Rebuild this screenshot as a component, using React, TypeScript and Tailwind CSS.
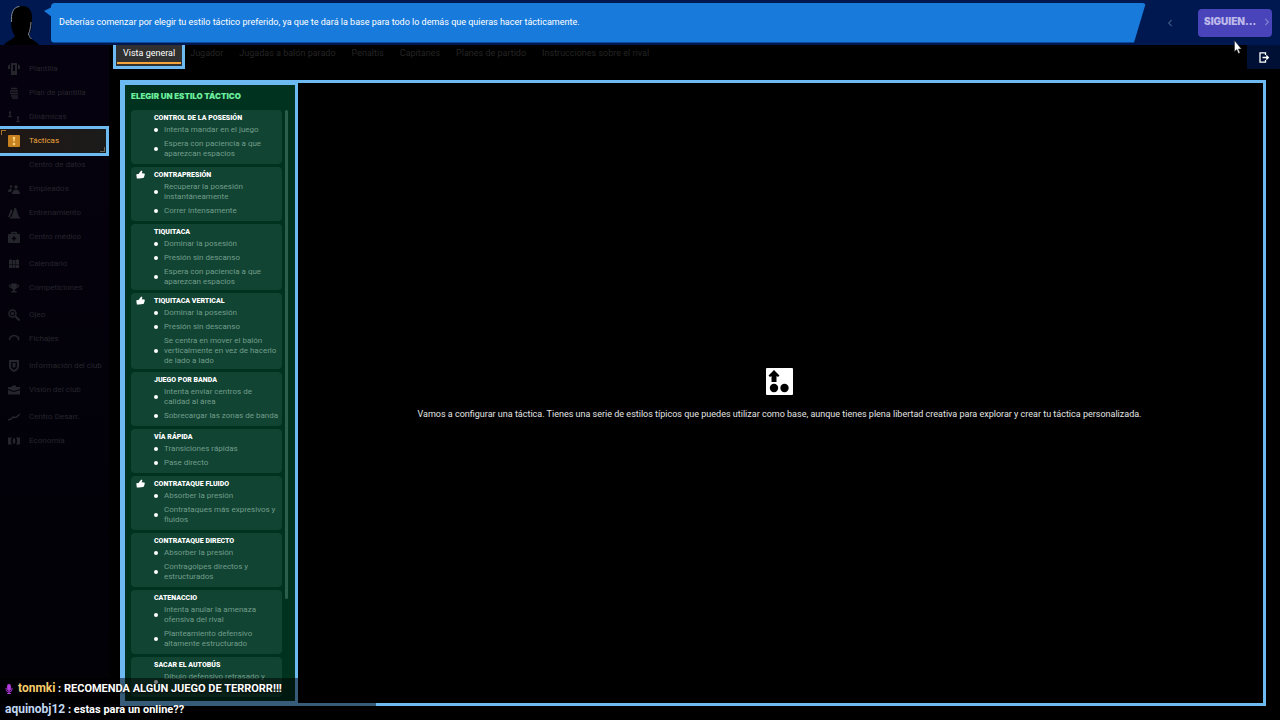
import type { ReactNode } from 'react'
import { FaBriefcaseMedical, FaChevronLeft, FaChevronRight, FaMicrophone, FaTrophy } from 'react-icons/fa'

type MenuItem = { label: string; icon: ReactNode }
type Style = { name: string; recommended?: boolean; traits: string[] }

const shirt = (
  <svg viewBox="0 0 12 12" className="size-3" fill="currentColor">
    <path d="M3 0h6v12H3zM5 2v6h2V2z" fillRule="evenodd" />
    <path d="M2 1v5H0V3zM10 1l2 2v3h-2z" />
  </svg>
)

const clipboard = (
  <svg viewBox="0 0 12 12" className="size-3" fill="none" stroke="currentColor" strokeWidth="1.5">
    <path d="M3 1.500h6M2 4h8M2 6.500h8M3 9h7M4 11h6" />
  </svg>
)

const dynamics = (
  <svg viewBox="0 0 12 12" className="size-3" fill="currentColor">
    <circle cx="2" cy="1.500" r="1.200" />
    <path d="M1.300 3h1.400v2h1v1.200H.3V5h1z" />
    <circle cx="10" cy="6.500" r="1.200" />
    <path d="M9.300 8h1.400v2h1v1.200H8.300V10h1z" />
  </svg>
)

const tactics = (
  <svg viewBox="0 0 12 12" className="size-3">
    <rect width="12" height="12" rx="1" fill="#c8811f" />
    <path d="M6 2.500v4" stroke="#ffd27a" strokeWidth="1.5" />
    <circle cx="6" cy="3" r="1.3" fill="#ffd27a" />
    <circle cx="6" cy="9" r="1.3" fill="#ffd27a" />
  </svg>
)

const staff = (
  <svg viewBox="0 0 12 12" className="size-3" fill="currentColor">
    <circle cx="3" cy="3.500" r="1.300" />
    <circle cx="8" cy="4" r="1.800" />
    <path d="M0 9c0-3 2-4 4-3L3 9zM4 11c0-3 2-4.500 4-4.500s4 1.500 4 4.500z" />
  </svg>
)

const cones = (
  <svg viewBox="0 0 12 12" className="size-3" fill="currentColor">
    <path d="M6.500 1H8l3 9h1v1.500H2V10h1.500zM3 2l1.500 2L2 10H0z" />
  </svg>
)

const calendar = (
  <svg viewBox="0 0 12 12" className="size-3" fill="currentColor">
    <path d="M1 2h3v4H1zM4.500 2h3v4h-3zM8 2h3v4H8zM1 6.500h3V10H1zM4.500 6.500h3V10h-3zM8 6.500h3V10H8zM2 1h1v1H2zM9 1h1v1H9z" />
  </svg>
)

const search = (
  <svg viewBox="0 0 12 12" className="size-3" fill="none" stroke="currentColor">
    <circle cx="4.500" cy="4.500" r="3.500" strokeWidth="1.500" />
    <circle cx="4.500" cy="4.500" r="1.200" fill="currentColor" />
    <path d="M7.500 7.500l4 4" strokeWidth="2" />
  </svg>
)

const transfers = (
  <svg viewBox="0 0 12 12" className="size-3" fill="none" stroke="currentColor" strokeWidth="1.5">
    <path d="M1.500 7A4.500 4.500 0 0 1 10 5M10.500 3.500v4" />
  </svg>
)

const shield = (
  <svg viewBox="0 0 12 12" className="size-3" fill="currentColor">
    <path d="M1 0h10v6c0 3-2 5-5 6-3-1-5-3-5-6zM3 2v4c0 2 1 3 3 4 2-1 3-2 3-4V2z" fillRule="evenodd" />
    <path d="M4.500 3h3v3.500L6 8 4.500 6.500z" />
  </svg>
)

const briefcase = (
  <svg viewBox="0 0 12 12" className="size-3" fill="currentColor">
    <path d="M4 1.500h4V3h4v2L6 7 0 5V3h4zM0 6l6 2 6-2v4.500H0z" />
  </svg>
)

const trend = (
  <svg viewBox="0 0 12 12" className="size-3" fill="none" stroke="currentColor" strokeWidth="1.5">
    <path d="M0 9l3-1 2-2 3 .5L12 3" />
  </svg>
)

const banknote = (
  <svg viewBox="0 0 12 12" className="size-3" fill="currentColor">
    <path d="M0 2.500h4C2.500 4 2.500 8 4 9.500H0zM12 2.500H8c1.500 1.500 1.500 5.500 0 7h4z" />
    <ellipse cx="6" cy="6" rx="1.300" ry="3" />
  </svg>
)

const thumb = (
  <svg viewBox="0 0 9 9" className="size-[9px]" fill="currentColor">
    <path d="M.3 4.300L2.500 4 5 .8c.8-.5 1.500.2 1.300.9L5.700 3.300l2.500.1c.8.1.8 1 .3 1.200.4.4.2 1-.2 1.200.2.500 0 .9-.4 1.100.1.600-.2 1-.8 1.100L3 8.400.8 8.600z" />
  </svg>
)

const menu: MenuItem[][] = [
  [
    { label: 'Plantilla', icon: shirt },
    { label: 'Plan de plantilla', icon: clipboard },
    { label: 'Dinámicas', icon: dynamics },
    { label: 'Tácticas', icon: tactics },
    { label: 'Centro de datos', icon: null },
    { label: 'Empleados', icon: staff },
    { label: 'Entrenamiento', icon: cones },
    { label: 'Centro médico', icon: <FaBriefcaseMedical className="size-3" /> },
  ],
  [
    { label: 'Calendario', icon: calendar },
    { label: 'Competiciones', icon: <FaTrophy className="size-3 p-px" /> },
  ],
  [
    { label: 'Ojeo', icon: search },
    { label: 'Fichajes', icon: transfers },
  ],
  [
    { label: 'Información del club', icon: shield },
    { label: 'Visión del club', icon: briefcase },
  ],
  [
    { label: 'Centro Desarr.', icon: trend },
    { label: 'Economía', icon: banknote },
  ],
]

const tabs = ['Jugador', 'Jugadas a balón parado', 'Penaltis', 'Capitanes', 'Planes de partido', 'Instrucciones sobre el rival']

const styles: Style[] = [
  { name: 'Control de la posesión', traits: ['Intenta mandar en el juego', 'Espera con paciencia a que aparezcan espacios'] },
  { name: 'Contrapresión', recommended: true, traits: ['Recuperar la posesión instantáneamente', 'Correr intensamente'] },
  { name: 'Tiquitaca', traits: ['Dominar la posesión', 'Presión sin descanso', 'Espera con paciencia a que aparezcan espacios'] },
  {
    name: 'Tiquitaca vertical',
    recommended: true,
    traits: ['Dominar la posesión', 'Presión sin descanso', 'Se centra en mover el balón verticalmente en vez de hacerlo de lado a lado'],
  },
  { name: 'Juego por banda', traits: ['Intenta enviar centros de calidad al área', 'Sobrecargar las zonas de banda'] },
  { name: 'Vía rápida', traits: ['Transiciones rápidas', 'Pase directo'] },
  { name: 'Contrataque fluido', recommended: true, traits: ['Absorber la presión', 'Contrataques más expresivos y fluidos'] },
  { name: 'Contrataque directo', traits: ['Absorber la presión', 'Contragolpes directos y estructurados'] },
  { name: 'Catenaccio', traits: ['Intenta anular la amenaza ofensiva del rival', 'Planteamiento defensivo altamente estructurado'] },
  { name: 'Sacar el autobús', traits: ['Dibujo defensivo retrasado y\n\u00a0'] },
]

function AdviceBar() {
  return (
    <header className="flex h-[45px] shrink-0 items-center bg-[#001850] pr-2">
      <svg viewBox="0 0 40 45" className="h-[45px] w-10 shrink-0">
        <path d="M4 45c2-4 9-5 11-9-3-4-4-9-4-14C11 12 14 6 22 6s11 6 10 16c0 5-1 10-3 13 1 5 8 6 10 10z" fill="#000" />
        <path d="M11.500 22c-.5-8 1-15 8-15.500M31 22c-.5 5-1 9-2.500 12 .5 2 1 3 3 5" fill="none" stroke="#7f8794" />
      </svg>
      <div className="flex min-w-0 flex-1 items-center">
        <svg viewBox="0 0 8 10" className="-mr-px mb-[21px] ml-1 h-[10px] w-2 shrink-0" fill="#187bdc">
          <path d="M0 4l8-4v10z" />
        </svg>
        <p className="flex h-10 flex-1 items-center rounded bg-[#187bdc] pl-2 text-[9px] text-white [clip-path:polygon(0_0,100%_0,calc(100%-12px)_100%,0_100%)]">
          Deberías comenzar por elegir tu estilo táctico preferido, ya que te dará la base para todo lo demás que quieras hacer tácticamente.
        </p>
      </div>
      <button type="button" aria-label="Anterior" className="mr-[22px] ml-[18px] flex size-3 items-center justify-center text-[8px] text-[#3d5583]">
        <FaChevronLeft />
      </button>
      <button
        type="button"
        className="flex h-7 w-[74px] items-center justify-between rounded bg-[#4a44bb] pr-px pb-[2px] pl-[6px] font-[Inter] text-[10px] font-black text-[#bcb8ea]"
      >
        SIGUIEN...
        <FaChevronRight className="size-2 text-[#8580d4]" />
      </button>
    </header>
  )
}

function Sidebar() {
  return (
    <nav className="flex w-[109px] shrink-0 flex-col gap-[3px] bg-linear-to-b from-[#06010f] to-[#010106] pt-3">
      {menu.map((group) => (
        <ul key={group[0].label}>
          {group.map(({ label, icon }) => {
            const active = label === 'Tácticas'
            return (
              <li
                key={label}
                className={
                  active
                    ? 'relative -my-[3px] border-y-[3px] border-r-[3px] border-[#6db9f2] bg-linear-to-r from-[#1f1714] to-[#1b1b1b] text-[#f0a63c]'
                    : 'text-[#25252c]'
                }
              >
                {active && (
                  <>
                    <span className="absolute top-px left-px size-[5px] border-t border-l border-[#a8752c]" />
                    <span className="absolute right-px bottom-px size-[5px] border-r border-b border-[#6a6257]" />
                  </>
                )}
                <a href="#" className="flex h-6 items-center gap-[9px] pl-2 text-[8px] whitespace-nowrap">
                  <span className="size-3">{icon}</span>
                  {label}
                </a>
              </li>
            )
          })}
        </ul>
      ))}
    </nav>
  )
}

function Tabs() {
  return (
    <div className="flex h-6 items-start">
      <nav className="flex flex-1 gap-4 text-[9px] text-[#242424]">
        <a href="#" className="-mr-[11px] ml-1 h-6 border-x-[3px] border-b-[3px] border-[#6db9f2] bg-[#303030] text-white">
          <span className="mx-px block h-[19px] border-b-2 border-[#f2a33a] px-[6px] leading-4">Vista general</span>
        </a>
        {tabs.map((tab) => (
          <a key={tab} href="#" className="leading-4">
            {tab}
          </a>
        ))}
      </nav>
      <button type="button" aria-label="Salir" className="flex h-6 w-[33px] items-center justify-center bg-[#001034] text-white">
        <svg viewBox="0 0 10 11" className="h-[11px] w-[10px]" fill="none" stroke="currentColor" strokeWidth="1.3">
          <path d="M6.500 3V.8H1v9.400h5.500V8M3.500 5.500h5.500M7.300 3.500l2 2-2 2" />
        </svg>
      </button>
    </div>
  )
}

function StyleCard({ name, recommended, traits }: Style) {
  return (
    <li className={`flex rounded bg-[#114433] pt-[3px] ${traits.length > 2 ? 'pb-[3px]' : 'pb-[5px]'}`}>
      <span className="w-[23px] shrink-0 pl-[5px] text-white">{recommended && thumb}</span>
      <div className="min-w-0 flex-1">
        <h3 className="mb-[2px] text-[7px] leading-[10px] font-black whitespace-nowrap text-white uppercase">{name}</h3>
        <ul className="flex flex-col gap-1">
          {traits.map((trait) => (
            <li key={trait} className="flex items-center gap-[6px] text-[8px] leading-[10px] text-[#719d8b]">
              <span className="size-1 shrink-0 rounded-full bg-white" />
              <span className="mr-[3px] whitespace-pre-line">{trait}</span>
            </li>
          ))}
        </ul>
      </div>
    </li>
  )
}

function StylePicker() {
  return (
    <aside className="flex w-[175px] shrink-0 flex-col border-t-2 border-r-[3px] border-b-2 border-l-2 border-[#6db9f2] bg-[#003220] pb-1 pl-[6px]">
      <h2 className="pt-1 pb-[6px] font-[Inter] text-[8px] leading-[14px] font-black text-[#6dee9c]">ELEGIR UN ESTILO TÁCTICO</h2>
      <div className="flex min-h-0 flex-1 gap-[3px] pt-px">
        <ul className="flex w-[151px] flex-col gap-[3px] overflow-hidden">
          {styles.map((style) => (
            <StyleCard key={style.name} {...style} />
          ))}
        </ul>
        <div className="h-5/6 w-[3px] rounded-full bg-[#2c5f4b]" />
      </div>
    </aside>
  )
}

function EmptyTactic() {
  return (
    <section className="flex flex-1 flex-col items-center justify-center gap-3 pt-[2px] pr-[2px] text-center">
      <svg viewBox="0 0 27 27" className="size-[27px]">
        <rect width="27" height="27" rx="1" fill="#fff" />
        <path d="M8 2l5.500 5.500L12 9l-1.500-1v6h-5V8L4 9 2.500 7.500z" />
        <circle cx="8" cy="20" r="4.200" />
        <circle cx="18.500" cy="20" r="4.200" />
      </svg>
      <p className="text-[9px] leading-[14px] text-[#e4e4e4]">
        Vamos a configurar una táctica. Tienes una serie de estilos típicos que puedes utilizar como base, aunque tienes plena libertad creativa para explorar y
        crear tu táctica personalizada.
      </p>
    </section>
  )
}

function Chat() {
  return (
    <div className="absolute bottom-0 left-0 flex h-[42px] w-[376px] flex-col bg-black/50 pl-[5px] text-[11px] leading-[21px] font-bold whitespace-nowrap text-white [text-shadow:0_1px_2px_#000]">
      <p className="flex items-center gap-[5px]">
        <FaMicrophone className="h-[10px] w-2 text-[#b43be0]" />
        <span>
          <span className="text-[12px] text-[#f6cc6c]">tonmki</span> : RECOMENDA ALGUN JUEGO DE TERRORR!!!
        </span>
      </p>
      <p>
        <span className="text-[12px] text-[#c0d8f4]">aquinobj12</span> : estas para un online??
      </p>
    </div>
  )
}

export default function App() {
  return (
    <div className="relative flex h-screen flex-col overflow-hidden bg-black font-[Roboto,sans-serif]">
      <AdviceBar />
      <div className="flex min-h-0 flex-1">
        <Sidebar />
        <div className="flex min-w-0 flex-1 flex-col">
          <Tabs />
          <main className="mt-[11px] mr-[14px] mb-[14px] ml-[11px] flex min-h-0 flex-1 border-[3px] border-[#6db9f2]">
            <StylePicker />
            <EmptyTactic />
          </main>
        </div>
      </div>
      <Chat />
      <svg viewBox="0 0 8 14" className="absolute top-10 right-[38px] h-[14px] w-2" fill="#fff" stroke="#222" strokeWidth=".5">
        <path d="M.5.5v11l2.300-2 1.700 4 1.500-.7-1.600-3.800h3z" />
      </svg>
    </div>
  )
}
